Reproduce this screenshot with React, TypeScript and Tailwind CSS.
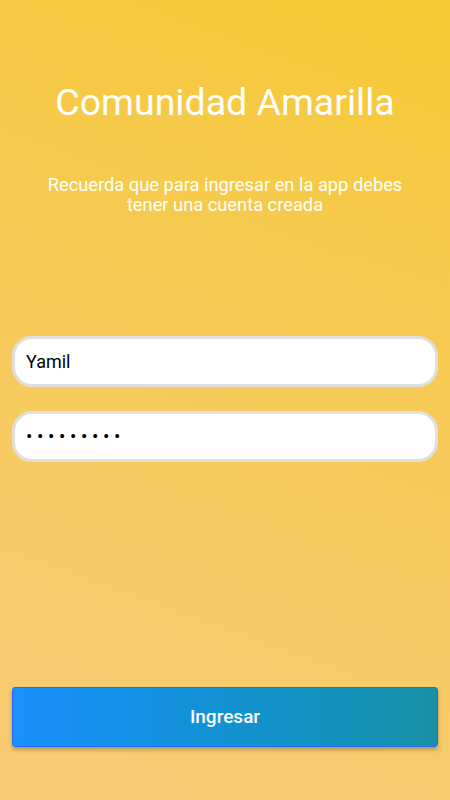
import { useState } from 'react';

export default function App() {
  const [user, setUser] = useState('Yamil');
  const [pass, setPass] = useState('123456789');

  return (
    <div
      className="flex h-[800px] w-full flex-col bg-linear-200 from-[#f6c932] to-[#f7cc76] px-3 text-white"
      style={{ fontFamily: 'Roboto, "Noto Sans", sans-serif' }}
    >
      <h1 className="mt-[79px] text-center text-[37.5px] leading-[46px] font-normal">Comunidad Amarilla</h1>
      <p className="mx-auto mt-[50px] w-[380px] text-center text-[18.3px] leading-[20px]">
        Recuerda que para ingresar en la app debes tener una cuenta creada
      </p>

      <div className="mt-[121px] flex flex-col gap-[24px]">
        <input
          value={user}
          onChange={(e) => setUser(e.target.value)}
          className="h-[51px] w-full rounded-[20px] border-[3px] border-[#dfdfdf] bg-white px-[11px] text-[18px] text-black outline-none"
        />
        <input
          type="password"
          value={pass}
          onChange={(e) => setPass(e.target.value)}
          className="h-[51px] w-full rounded-[20px] border-[3px] border-[#dfdfdf] bg-white px-[11px] text-[19px] tracking-[4.6px] text-black outline-none"
        />
      </div>

      <button className="mt-auto mb-[53px] h-[60px] w-full rounded-[3px] border border-[#1f6bff] bg-linear-to-r from-[#1990ff] to-[#1890a6] text-[19px] font-medium text-white shadow-[0_3px_4px_rgba(0,0,0,0.25)]">
        Ingresar
      </button>
    </div>
  );
}
